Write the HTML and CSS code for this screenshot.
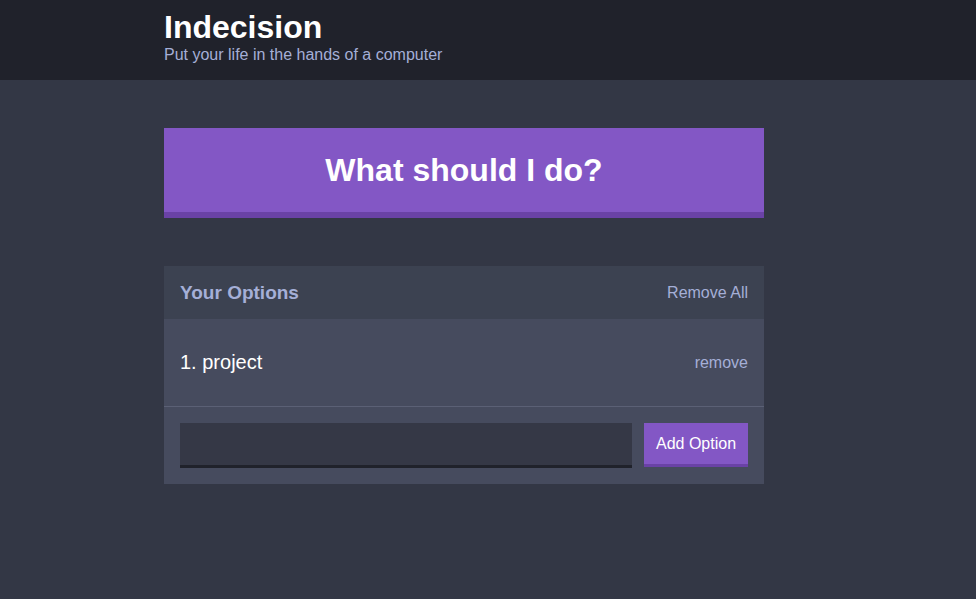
FILE: index.html
```html
<!DOCTYPE html>
<html>
<head>
<meta charset="utf-8">
<title>Indecision</title>
<link rel="stylesheet" href="styles.css">
</head>
<body>
<header class="header">
  <div class="container">
    <h1 class="header__title">Indecision</h1>
    <h2 class="header__subtitle">Put your life in the hands of a computer</h2>
  </div>
</header>
<main class="container main">
  <button class="big-button">What should I do?</button>
  <section class="widget">
    <div class="widget-header">
      <h3 class="widget-header__title">Your Options</h3>
      <button class="button-link">Remove All</button>
    </div>
    <div class="option">
      <p class="option__text">1. project</p>
      <button class="button-link">remove</button>
    </div>
    <form class="add-option">
      <input class="add-option__input" type="text" name="option">
      <button class="button" type="button">Add Option</button>
    </form>
  </section>
</main>
</body>
</html>
```

FILE: styles.css
```css
* { box-sizing: border-box; }
html, body { margin: 0; padding: 0; }
body {
  background: #333745;
  font-family: "Liberation Sans", Arial, sans-serif;
  color: #ffffff;
  height: 599px;
}
.container {
  width: 600px;
  margin-left: 164px;
}
.header {
  background: #20222b;
  padding: 9px 0 16px;
}
.header__title {
  margin: 0;
  font-size: 32px;
  font-weight: bold;
  line-height: 37px;
  color: #ffffff;
}
.header__subtitle {
  margin: 0;
  font-size: 16px;
  font-weight: normal;
  line-height: 18px;
  color: #a5afd7;
}
.main {
  padding-top: 48px;
}
.big-button {
  display: block;
  width: 100%;
  background: #8357c5;
  border: none;
  border-bottom: 6px solid #6a42a6;
  color: #ffffff;
  font-family: "Liberation Sans", Arial, sans-serif;
  font-weight: bold;
  font-size: 32px;
  line-height: 36px;
  padding: 24px 0;
  margin: 0 0 48px;
  cursor: pointer;
}
.widget {
  background: #464b5e;
}
.widget-header {
  background: #3c4251;
  display: flex;
  justify-content: space-between;
  align-items: center;
  padding: 0 16px;
  height: 53px;
}
.widget-header__title {
  margin: 0;
  color: #a5afd7;
  font-size: 19px;
  font-weight: bold;
}
.button-link {
  background: none;
  border: none;
  padding: 0;
  color: #a5afd7;
  font-family: "Liberation Sans", Arial, sans-serif;
  font-size: 16px;
  cursor: pointer;
}
.option {
  display: flex;
  justify-content: space-between;
  align-items: center;
  padding: 32px 16px;
  border-bottom: 1px solid #5b6075;
}
.option__text {
  margin: 0;
  font-size: 20px;
  line-height: 23px;
  color: #ffffff;
}
.add-option {
  display: flex;
  gap: 12px;
  padding: 16px;
  margin: 0;
}
.add-option__input {
  flex: 1;
  height: 45px;
  background: #353846;
  border: none;
  border-bottom: 3px solid #20222b;
  color: #a5afd7;
  font-size: 16px;
  padding: 0 12px;
  outline: none;
}
.button {
  background: #8357c5;
  border: none;
  border-bottom: 3px solid #6a42a6;
  color: #ffffff;
  font-family: "Liberation Sans", Arial, sans-serif;
  font-size: 16px;
  padding: 0;
  white-space: nowrap;
  height: 44px;
  width: 104px;
  cursor: pointer;
}
```
